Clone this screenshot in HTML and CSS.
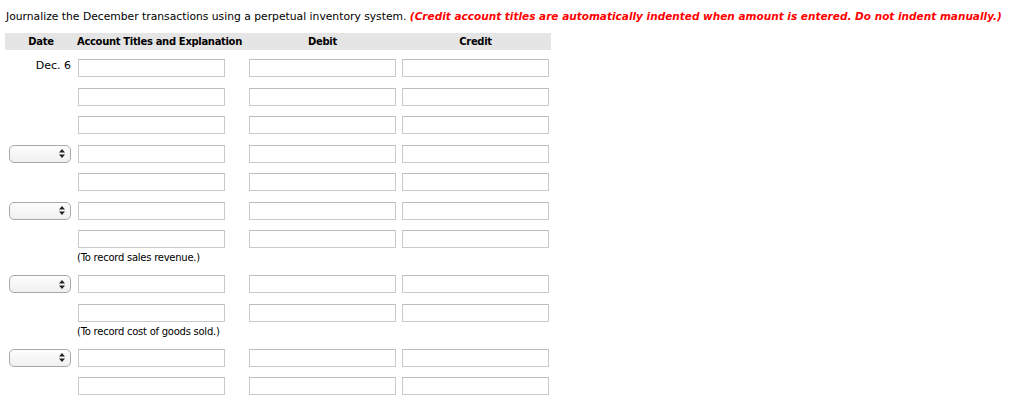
FILE: index.html
```html
<!DOCTYPE html>
<html>
<head>
<meta charset="utf-8">
<link rel="stylesheet" href="styles.css">
</head>
<body>
<p class="intro">Journalize the December transactions using a perpetual inventory system. <em class="note">(Credit account titles are automatically indented when amount is entered. Do not indent manually.)</em></p>
<div class="journal">
  <div class="head">
    <div class="c-date">Date</div>
    <div class="c-acct">Account Titles and Explanation</div>
    <div class="c-debit">Debit</div>
    <div class="c-credit">Credit</div>
  </div>

  <div class="row">
    <div class="c-date"><span class="date">Dec. 6</span></div>
    <div class="c-acct"><input class="box" type="text"></div>
    <div class="c-debit"><input class="box" type="text"></div>
    <div class="c-credit"><input class="box" type="text"></div>
  </div>
  <div class="row">
    <div class="c-date"></div>
    <div class="c-acct"><input class="box" type="text"></div>
    <div class="c-debit"><input class="box" type="text"></div>
    <div class="c-credit"><input class="box" type="text"></div>
  </div>
  <div class="row">
    <div class="c-date"></div>
    <div class="c-acct"><input class="box" type="text"></div>
    <div class="c-debit"><input class="box" type="text"></div>
    <div class="c-credit"><input class="box" type="text"></div>
  </div>
  <div class="row">
    <div class="c-date"><span class="sel"><select></select><svg class="arr" width="6" height="9" viewBox="0 0 6 9"><path d="M0 3.5 L3 0 L6 3.5 Z M0 5.5 L3 9 L6 5.5 Z" fill="#222"/></svg></span></div>
    <div class="c-acct"><input class="box" type="text"></div>
    <div class="c-debit"><input class="box" type="text"></div>
    <div class="c-credit"><input class="box" type="text"></div>
  </div>
  <div class="row">
    <div class="c-date"></div>
    <div class="c-acct"><input class="box" type="text"></div>
    <div class="c-debit"><input class="box" type="text"></div>
    <div class="c-credit"><input class="box" type="text"></div>
  </div>
  <div class="row">
    <div class="c-date"><span class="sel"><select></select><svg class="arr" width="6" height="9" viewBox="0 0 6 9"><path d="M0 3.5 L3 0 L6 3.5 Z M0 5.5 L3 9 L6 5.5 Z" fill="#222"/></svg></span></div>
    <div class="c-acct"><input class="box" type="text"></div>
    <div class="c-debit"><input class="box" type="text"></div>
    <div class="c-credit"><input class="box" type="text"></div>
  </div>
  <div class="row">
    <div class="c-date"></div>
    <div class="c-acct"><input class="box" type="text"></div>
    <div class="c-debit"><input class="box" type="text"></div>
    <div class="c-credit"><input class="box" type="text"></div>
  </div>
  <div class="expl"><div class="c-date"></div><div class="c-text">(To record sales revenue.)</div></div>

  <div class="row">
    <div class="c-date"><span class="sel"><select></select><svg class="arr" width="6" height="9" viewBox="0 0 6 9"><path d="M0 3.5 L3 0 L6 3.5 Z M0 5.5 L3 9 L6 5.5 Z" fill="#222"/></svg></span></div>
    <div class="c-acct"><input class="box" type="text"></div>
    <div class="c-debit"><input class="box" type="text"></div>
    <div class="c-credit"><input class="box" type="text"></div>
  </div>
  <div class="row">
    <div class="c-date"></div>
    <div class="c-acct"><input class="box" type="text"></div>
    <div class="c-debit"><input class="box" type="text"></div>
    <div class="c-credit"><input class="box" type="text"></div>
  </div>
  <div class="expl"><div class="c-date"></div><div class="c-text">(To record cost of goods sold.)</div></div>

  <div class="row">
    <div class="c-date"><span class="sel"><select></select><svg class="arr" width="6" height="9" viewBox="0 0 6 9"><path d="M0 3.5 L3 0 L6 3.5 Z M0 5.5 L3 9 L6 5.5 Z" fill="#222"/></svg></span></div>
    <div class="c-acct"><input class="box" type="text"></div>
    <div class="c-debit"><input class="box" type="text"></div>
    <div class="c-credit"><input class="box" type="text"></div>
  </div>
  <div class="row">
    <div class="c-date"></div>
    <div class="c-acct"><input class="box" type="text"></div>
    <div class="c-debit"><input class="box" type="text"></div>
    <div class="c-credit"><input class="box" type="text"></div>
  </div>
</div>
</body>
</html>
```
FILE: styles.css
```css
html, body {
  margin: 0;
  padding: 0;
  background: #fff;
}
body {
  font-family: "DejaVu Sans", Verdana, sans-serif;
  font-size: 11px;
  color: #000;
  overflow: hidden;
}
.intro {
  margin: 0;
  padding: 9px 0 0 6px;
  line-height: 14px;
  font-size: 10.75px;
  white-space: nowrap;
}
.note {
  color: #f00;
  font-weight: bold;
  font-style: italic;
  font-size: 10.5px;
}
.journal {
  margin: 9px 0 0 5px;
  width: 546px;
}
.head {
  display: flex;
  background: #e5e5e5;
  height: 17px;
  line-height: 17px;
  font-weight: bold;
  font-size: 10px;
  letter-spacing: -0.33px;
  margin-bottom: 4px;
  white-space: nowrap;
}
.c-date {
  width: 72px;
  flex: none;
  text-align: center;
}
.c-acct {
  width: 166px;
  flex: none;
  padding-left: 1px;
}
.head .c-acct {
  padding-left: 0;
  width: 167px;
}
.c-debit {
  width: 153px;
  flex: none;
  padding-left: 5px;
}
.c-credit {
  width: 147px;
  flex: none;
}
.head .c-debit {
  width: 147px;
  padding: 0 6px 0 5px;
  text-align: center;
}
.head .c-credit {
  width: 147px;
  text-align: center;
}
.row {
  display: flex;
  align-items: center;
  height: 28.5px;
}
.row .c-date {
  text-align: right;
  padding-right: 5px;
  width: 67px;
  display: flex;
  justify-content: flex-end;
  align-items: center;
}
.date {
  margin-top: -6px;
  font-size: 11px;
  padding-right: 1px;
}
.box {
  box-sizing: border-box;
  width: 147px;
  height: 18px;
  margin: 0;
  padding: 0 3px;
  border: 1px solid #cacaca;
  border-top-color: #bdbdbd;
  background: #fff;
  display: block;
  outline: none;
}
.sel {
  position: relative;
  display: block;
  width: 62px;
  height: 18px;
  margin-right: 1px;
}
.sel select {
  -webkit-appearance: none;
  appearance: none;
  box-sizing: border-box;
  width: 62px;
  height: 18px;
  margin: 0;
  border: 1px solid #a8a8a8;
  border-radius: 5px;
  background: linear-gradient(#fdfdfd, #f0f0f0);
  display: block;
}
.arr {
  position: absolute;
  right: 6px;
  top: 4.5px;
}
.expl {
  display: flex;
  height: 16.5px;
  margin-top: -2.5px;
  margin-bottom: 2.5px;
}
.c-text {
  font-family: "DejaVu Sans", Tahoma, sans-serif;
  font-size: 10px;
  line-height: 14px;
  padding-left: 0;
  letter-spacing: -0.25px;
  white-space: nowrap;
}
```
